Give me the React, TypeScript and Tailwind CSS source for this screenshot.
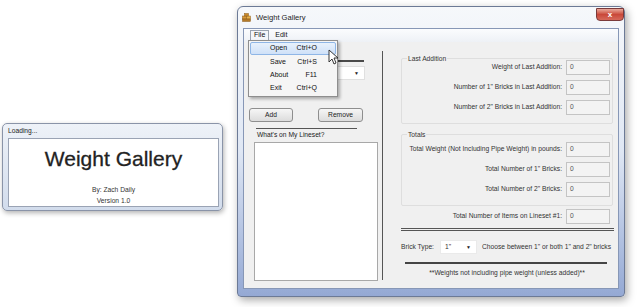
const FONT = "font-['Liberation_Sans',Arial,sans-serif]";

function TextBox() {
  return (
    <div className="w-[44px] h-[15px] bg-[#f3f3f3] border border-[#c4c4c4] text-[6.7px] leading-none text-[#555] pl-[3px] pt-[3px] shrink-0">
      0
    </div>
  );
}

function Field({ label }: { label: string }) {
  return (
    <div className="flex items-center justify-end gap-[4px] h-[15px]">
      <span className="text-[6.7px] text-[#333] whitespace-nowrap">{label}</span>
      <TextBox />
    </div>
  );
}

function GroupBox({ title, height, pt, children }: { title: string; height: number; pt: string; children: React.ReactNode }) {
  return (
    <div
      className={`relative ml-[18px] w-[212px] border border-[#dedede] rounded-[2px] pr-[2px] flex flex-col gap-[5px] ${pt}`}
      style={{ height }}
    >
      <span className="absolute -top-[5px] left-[5px] bg-[#f0f0f0] px-[1px] text-[6.7px] text-[#333] leading-[9px]">
        {title}
      </span>
      {children}
    </div>
  );
}

function Combo({ text, className }: { text: string; className: string }) {
  return (
    <div className={`flex items-center bg-white border border-[#e0e0e0] ${className}`}>
      <span className="flex-1 pl-[4px] text-[6.7px] text-[#333]">{text}</span>
      <span className="w-[10px] text-[5px] text-[#222] leading-none">▼</span>
    </div>
  );
}

function Button({ label, className }: { label: string; className: string }) {
  return (
    <div
      className={`h-[14px] flex items-center justify-center rounded-[3px] border border-[#8e8e8e] bg-gradient-to-b from-[#f6f6f6] to-[#dcdcdc] text-[6.7px] text-[#222] ${className}`}
    >
      {label}
    </div>
  );
}

function Cursor() {
  return (
    <svg className="absolute left-[84px] top-[20px]" width="10" height="16" viewBox="0 0 10 16">
      <path d="M1 1 L1 13 L4 10 L6 15 L8 14 L6 9 L10 9 Z" fill="#fff" stroke="#222" strokeWidth="0.9" strokeLinejoin="round" />
    </svg>
  );
}

function MainWindow() {
  return (
    <div className="absolute left-[237px] top-[6px] w-[388px] h-[291px] rounded-t-[6px] rounded-b-[4px] border border-[#6c7a96] bg-gradient-to-b from-[#f6f8fb] via-[#dfe7f4] to-[#95a9d4] shadow-[2px_3px_8px_rgba(0,0,0,0.35)] flex flex-col">
      {/* title bar */}
      <div className="h-[21px] flex items-center pl-[4px] relative">
        <svg width="9" height="9" viewBox="0 0 9 9" className="mr-[5px]">
          <rect x="0.5" y="3" width="4" height="3" fill="#d89a3a" stroke="#8a5a1a" strokeWidth="0.5" />
          <rect x="4.5" y="3" width="4" height="3" fill="#e9b24c" stroke="#8a5a1a" strokeWidth="0.5" />
          <rect x="2.5" y="0.5" width="4" height="2.5" fill="#c98a2a" stroke="#8a5a1a" strokeWidth="0.5" />
          <rect x="0.5" y="6" width="8" height="2.5" fill="#b47a28" stroke="#8a5a1a" strokeWidth="0.5" />
        </svg>
        <span className="text-[7.6px] text-[#1e1e1e]">Weight Gallery</span>
        <div className="absolute right-[0px] top-[1px] w-[28px] h-[13px] rounded-b-[4px] border border-[#7a3a3a] bg-gradient-to-b from-[#e8a99c] via-[#c9483a] to-[#d6695a] flex items-center justify-center">
          <span className="text-white text-[8px] font-bold leading-none">x</span>
        </div>
      </div>

      {/* client area */}
      <div className="relative mx-[5px] h-[261px] bg-[#f0f0f0] border border-[#8797b6] flex flex-col">
        {/* menu bar */}
        <div className="h-[13px] flex items-center bg-gradient-to-b from-[#fbfcfe] to-[#eef1f6] text-[7px] text-[#111] pl-[6px]">
          <span className="h-[12px] px-[3px] flex items-center border border-[#9aa3b0] bg-[#f4f6f9]">File</span>
          <span className="ml-[6px]">Edit</span>
        </div>

        {/* body */}
        <div className="flex flex-1">
          {/* left column */}
          <div className="w-[138px] flex flex-col">
            <div className="mt-[18px] ml-[12px] w-[108px] h-[2px] bg-[#4a4a4a]" />
            <Combo text="" className="mt-[4px] ml-[12px] w-[109px] h-[14px]" />
            <div className="mt-[28px] flex">
              <Button label="Add" className="ml-[5px] w-[44px]" />
              <Button label="Remove" className="ml-[25px] w-[45px]" />
            </div>
            <div className="mt-[6px] ml-[12px] w-[101px] h-px bg-[#555]" />
            <span className="ml-[13px] mt-[1px] text-[6.7px] text-[#222] leading-[10px]">What's on My Lineset?</span>
            <div className="mt-[2px] ml-[10px] w-[124px] h-[139px] bg-white border border-[#a8a8a8]" />
          </div>
          <div className="mt-[9px] w-px h-[229px] bg-[#555]" />

          {/* right column */}
          <div className="flex-1 flex flex-col">
            <div className="mt-[16px]" />
            <GroupBox title="Last Addition" height={66} pt="pt-[1px]">
              <Field label="Weight of Last Addition:" />
              <Field label={'Number of 1" Bricks in Last Addition:'} />
              <Field label={'Number of 2" Bricks in Last Addition:'} />
            </GroupBox>
            <div className="mt-[10px]" />
            <GroupBox title="Totals" height={72} pt="pt-[7px]">
              <Field label="Total Weight (Not Including Pipe Weight) in pounds:" />
              <Field label={'Total Number of 1" Bricks:'} />
              <Field label={'Total Number of 2" Bricks:'} />
            </GroupBox>
            <div className="mt-[3px] ml-[18px] w-[212px] pr-[3px]">
              <Field label="Total Number of Items on Lineset #1:" />
            </div>
            <div className="mt-[4px] ml-[18px] w-[213px] h-[3px] border-y border-[#555]" />
            <div className="mt-[9px] ml-[18px] flex items-center h-[14px] text-[6.7px] text-[#333]">
              <span className="w-[39px]">Brick Type:</span>
              <Combo text={'1"'} className="w-[37px] h-[14px] border-[#eaeaea]" />
              <span className="ml-[5px] whitespace-nowrap">{'Choose between 1" or both 1" and 2" bricks'}</span>
            </div>
            <div className="mt-[8px] ml-[22px] w-[202px] h-[2px] bg-[#454545]" />
            <div className="mt-[4px] ml-[18px] w-[212px] text-center text-[6.7px] text-[#333] leading-[10px]">
              **Weights not including pipe weight (unless added)**
            </div>
          </div>
        </div>

        {/* open File menu */}
        <div className="absolute left-[4px] top-[11px] w-[90px] h-[57px] bg-[#f5f5f5] border border-[#8e8e8e] shadow-[2px_2px_3px_rgba(0,0,0,0.3)] p-[1px] flex flex-col text-[7px] text-[#111]">
          {[
            ["Open", "Ctrl+O"],
            ["Save", "Ctrl+S"],
            ["About", "F11"],
            ["Exit", "Ctrl+Q"],
          ].map(([name, key], i) => (
            <div
              key={name}
              className={`h-[13.5px] flex items-center pl-[19px] pr-[18px] ${
                i === 0 ? "bg-gradient-to-b from-[#e8f1fc] to-[#cfe1f8] border border-[#8fb6e6] rounded-[2px]" : "border border-transparent"
              }`}
            >
              <span className="flex-1">{name}</span>
              <span>{key}</span>
            </div>
          ))}
        </div>
        <Cursor />
      </div>
    </div>
  );
}

function LoadingWindow() {
  return (
    <div className="absolute left-[2px] top-[123px] w-[221px] h-[88px] rounded-[5px] border border-[#8a94a8] bg-gradient-to-b from-[#eef2f8] to-[#d2dcec] shadow-[1px_2px_5px_rgba(0,0,0,0.3)] flex flex-col">
      <div className="h-[14px] flex items-center pl-[5px] text-[6.7px] text-[#222]">Loading...</div>
      <div className="ml-[5px] mr-[3px] h-[69px] bg-white border border-[#9aa3b4] flex flex-col items-center">
        <span className="mt-[7px] text-[21px] leading-[25px] text-[#222] [-webkit-text-stroke:0.3px_#222]">Weight Gallery</span>
        <span className="mt-[14px] text-[6.7px] text-[#333] leading-[10px]">By: Zach Daily</span>
        <span className="mt-[1px] text-[6.7px] text-[#333] leading-[10px]">Version 1.0</span>
      </div>
    </div>
  );
}

export default function App() {
  return (
    <div className={`relative w-[640px] h-[307px] bg-white overflow-hidden ${FONT}`}>
      <LoadingWindow />
      <MainWindow />
    </div>
  );
}
